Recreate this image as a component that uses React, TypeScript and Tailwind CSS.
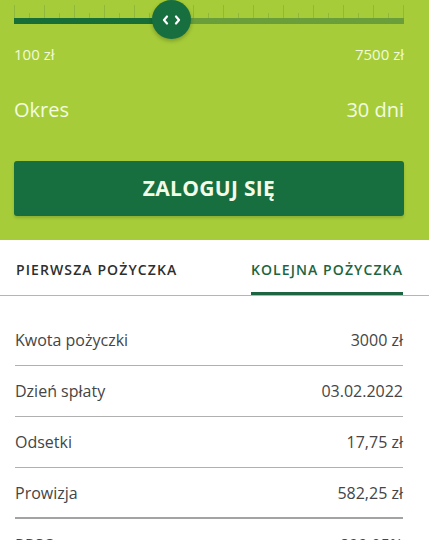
const ticks = Array.from({ length: 27 }, (_, i) => i);

const rows = [
  { label: "Kwota pożyczki", value: "3000 zł" },
  { label: "Dzień spłaty", value: "03.02.2022" },
  { label: "Odsetki", value: "17,75 zł" },
  { label: "Prowizja", value: "582,25 zł" },
];

export default function App() {
  return (
    <div className="w-[429px] h-[540px] overflow-hidden bg-white font-['Open_Sans',sans-serif]">
      {/* ── calculator ── */}
      <div className="bg-[#a6cd39] h-[240px] pl-[14px] pr-[25px]">
        <div className="relative h-[40px]">
          {/* ticks */}
          <div className="absolute left-0 right-0 top-[5px] h-[13px] flex justify-between items-end">
            {ticks.map((i) => (
              <span
                key={i}
                className={`w-px bg-[#8fb83c] ${i % 2 === 0 ? "h-[13px]" : "h-[5px]"}`}
              />
            ))}
          </div>
          {/* track */}
          <div className="absolute left-0 right-0 top-[18px] h-[6px] flex">
            <div className="w-[157px] bg-[#176f37]" />
            <div className="flex-1 bg-[#6a9e3b]" />
          </div>
          {/* thumb */}
          <div className="absolute left-[138px] top-0 w-[39px] h-[39px] rounded-full bg-[#176f3f] shadow-[0_2px_4px_rgba(0,0,0,0.25)] flex items-center justify-center gap-[5px]">
            <svg width="7" height="10" viewBox="0 0 7 10">
              <path d="M5 1.5 L2 5 L5 8.5" fill="none" stroke="#fff" strokeWidth="2.2" strokeLinecap="round" strokeLinejoin="round" />
            </svg>
            <svg width="7" height="10" viewBox="0 0 7 10">
              <path d="M2 1.5 L5 5 L2 8.5" fill="none" stroke="#fff" strokeWidth="2.2" strokeLinecap="round" strokeLinejoin="round" />
            </svg>
          </div>
        </div>

        <div className="mt-[4px] flex justify-between text-[15px] leading-[20px] text-[#f1fadc]">
          <span>100 zł</span>
          <span>7500 zł</span>
        </div>

        <div className="mt-[33px] flex justify-between text-[20px] leading-[26px] text-[#f3fbe0]">
          <span>Okres</span>
          <span>30 dni</span>
        </div>

        <button className="mt-[38px] w-full h-[55px] rounded-[3px] bg-[#176e3e] shadow-[0_2px_3px_rgba(0,0,0,0.15)] text-[21px] font-bold text-[#f4fbe6] tracking-[0.3px]">
          ZALOGUJ SIĘ
        </button>
      </div>

      {/* ── tabs ── */}
      <div className="border-b border-[#b5b5b5] pl-[16px] pr-[26px] flex justify-between">
        <div className="pt-[22px] pb-[17px] text-[14px] leading-[16px] font-semibold tracking-[1.1px] text-[#2e2e2e]">
          PIERWSZA POŻYCZKA
        </div>
        <div className="pt-[22px] pb-[14px] border-b-[3px] border-[#1c6540] text-[14px] leading-[16px] font-semibold tracking-[1.1px] text-[#1c6540]">
          KOLEJNA POŻYCZKA
        </div>
      </div>

      {/* ── summary ── */}
      <div className="pl-[15px] pr-[26px] pt-[19px] text-[16px] text-[#454545]">
        {rows.map((r, i) => (
          <div
            key={r.label}
            className={`h-[51px] flex items-center justify-between ${
              i === rows.length - 1 ? "border-b-2 border-[#a3a3a3]" : "border-b border-[#b0b0b0]"
            }`}
          >
            <span>{r.label}</span>
            <span>{r.value}</span>
          </div>
        ))}
        <div className="h-[51px] flex items-center justify-between">
          <span>RRSO</span>
          <span>899,05%</span>
        </div>
      </div>
    </div>
  );
}
